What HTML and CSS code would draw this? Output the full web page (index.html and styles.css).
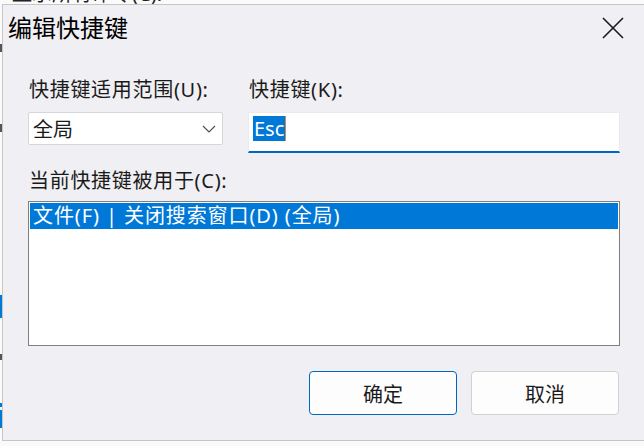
FILE: index.html
```html
<!DOCTYPE html>
<html lang="zh-CN">
<head>
  <meta charset="UTF-8">
  <title>编辑快捷键</title>
  <link rel="stylesheet" href="styles.css">
</head>
<body>
  <!-- window behind the dialog -->
  <div class="backdrop">
    <div class="backdrop-label">显示所有命令(C):</div>
    <div class="backdrop-strip">
      <span class="mark m1"></span>
      <span class="mark m2"></span>
      <span class="mark m3"></span>
      <span class="mark m4"></span>
      <span class="mark m5"></span>
      <span class="mark m6"></span>
    </div>
  </div>

  <div class="dialog">
    <!-- Title bar -->
    <div class="titlebar">
      <span class="title">编辑快捷键</span>
      <button class="close" aria-label="关闭">
        <svg width="22" height="22" viewBox="0 0 22 22">
          <path d="M1 1 L21 21 M21 1 L1 21" stroke="#1a1a1a" stroke-width="1.6" fill="none"/>
        </svg>
      </button>
    </div>

    <div class="content">
      <div class="row">
        <div class="field scope">
          <label class="label">快捷键适用范围(U):</label>
          <div class="combo">
            <span>全局</span>
            <svg width="14" height="8" viewBox="0 0 14 8">
              <path d="M1 1 L7 7 L13 1" stroke="#505050" stroke-width="1.2" fill="none"/>
            </svg>
          </div>
        </div>
        <div class="field key">
          <label class="label">快捷键(K):</label>
          <div class="input"><span class="sel">Esc</span><span class="caret"></span></div>
        </div>
      </div>

      <label class="label used">当前快捷键被用于(C):</label>
      <div class="list">
        <div class="item selected">文件(F) | 关闭搜索窗口(D) (全局)</div>
      </div>

      <div class="buttons">
        <button class="btn primary">确定</button>
        <button class="btn">取消</button>
      </div>
    </div>
  </div>
</body>
</html>
```

FILE: styles.css
```css
body {
  margin: 0;
  width: 644px;
  height: 446px;
  overflow: hidden;
  background: #fafafa;
  font-family: "Noto Sans", "Noto Sans CJK SC", sans-serif;
  color: #1a1a1a;
  position: relative;
}

.backdrop {
  position: absolute;
  left: 0;
  top: 0;
  width: 644px;
  height: 446px;
  overflow: hidden;
}

.backdrop-label {
  position: absolute;
  left: 12px;
  top: -18px;
  font-size: 20px;
  line-height: 24px;
  color: #222;
}

.backdrop-strip {
  position: absolute;
  left: 0;
  top: 4px;
  width: 2px;
  height: 442px;
}

.mark {
  position: absolute;
  left: 0;
  width: 2px;
  background: #555;
}

.m1 { top: 40px; height: 8px; }
.m2 { top: 120px; height: 8px; }
.m3 { top: 291px; height: 23px; background: #0078d7; }
.m4 { top: 350px; height: 6px; }
.m5 { top: 399px; height: 4px; background: #0078d7; }
.m6 { top: 406px; height: 18px; background: #0078d7; }

.dialog {
  position: absolute;
  left: 2px;
  top: 4px;
  width: 642px;
  height: 437px;
  box-sizing: border-box;
  background: #f0eff3;
  border: 1px solid #c6c6c6;
  border-right: none;
}

.titlebar {
  height: 46px;
  display: flex;
  align-items: center;
  padding-left: 5px;
}

.title {
  font-size: 24px;
  line-height: 46px;
  color: #000;
}

.close {
  margin-left: auto;
  margin-right: 20px;
  border: none;
  background: none;
  padding: 0;
  width: 22px;
  height: 22px;
  display: flex;
}

.content {
  width: 592px;
  padding-left: 25px;
}

.row {
  display: flex;
  margin-top: 27px;
}

.label {
  display: block;
  font-size: 20px;
  line-height: 24px;
  margin-bottom: 10px;
  padding-left: 1px;
  letter-spacing: 0.7px;
  white-space: nowrap;
}

.scope {
  width: 195px;
}

.key {
  flex: 1;
  margin-left: 25px;
}

.combo {
  height: 33px;
  box-sizing: border-box;
  background: #fff;
  border: 1px solid #d6d6d6;
  border-radius: 2px;
  display: flex;
  align-items: center;
  padding: 0 6px 0 4px;
  font-size: 20px;
}

.combo svg {
  margin-left: auto;
}

.input {
  height: 41px;
  box-sizing: border-box;
  background: #fff;
  border: 1px solid #ebebeb;
  border-bottom: 2px solid #0067c0;
  display: flex;
  align-items: center;
  padding-left: 4px;
  padding-bottom: 7px;
}

.sel {
  background: #0078d7;
  color: #fff;
  font-size: 20px;
  line-height: 25px;
  padding: 0 1px;
}

.caret {
  width: 1px;
  height: 25px;
  background: #d4874a;
}

.used {
  margin-top: 16px;
  margin-bottom: 8px;
}

.list {
  height: 145px;
  box-sizing: border-box;
  background: #fff;
  border: 1px solid #808080;
  padding: 1px;
}

.item {
  height: 26px;
  font-size: 20px;
  line-height: 26px;
  padding-left: 3px;
  letter-spacing: 0.9px;
}

.item.selected {
  background: #0078d7;
  color: #fff;
}

.buttons {
  display: flex;
  justify-content: flex-end;
  gap: 14px;
  margin-top: 25px;
  margin-right: 1px;
}

.btn {
  width: 148px;
  height: 44px;
  box-sizing: border-box;
  background: #fdfdfd;
  border: 1px solid #d0d0d0;
  border-radius: 4px;
  font-family: "Noto Sans", "Noto Sans CJK SC", sans-serif;
  font-size: 20px;
  color: #1a1a1a;
}

.btn.primary {
  border-color: #0067c0;
}
```
